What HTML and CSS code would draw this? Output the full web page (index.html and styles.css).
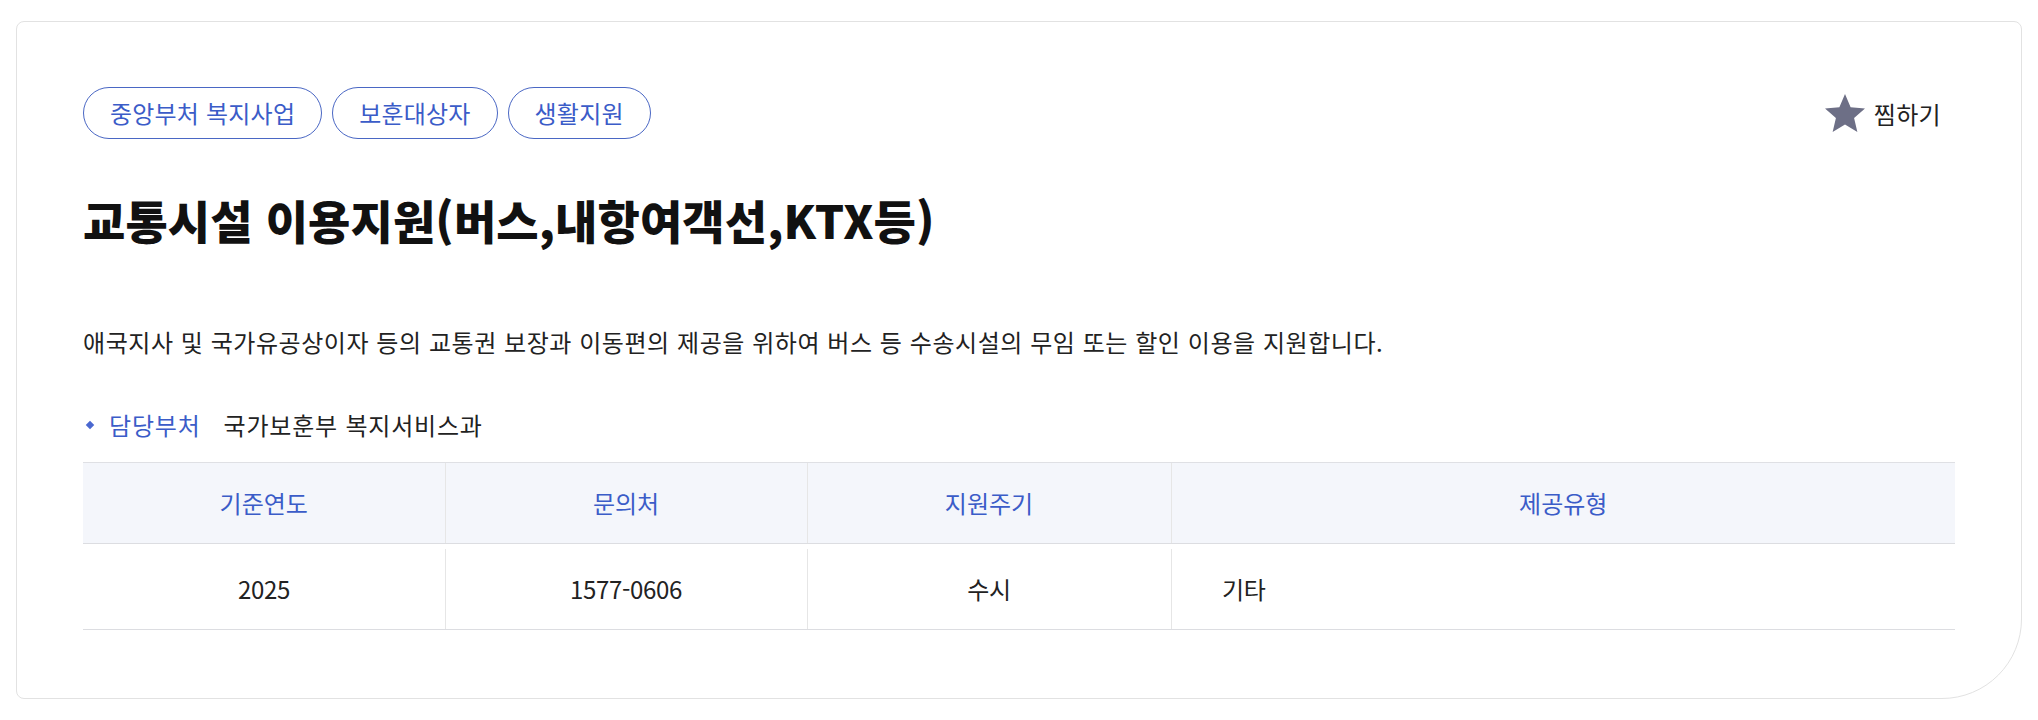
FILE: index.html
```html
<!DOCTYPE html>
<html lang="ko">
<head>
    <meta charset="UTF-8">
    <meta name="viewport" content="width=device-width, initial-scale=1.0">
    <title>교통시설 이용지원</title>
    <link rel="stylesheet" href="styles.css">
</head>
<body>
    <!-- 서비스 상세 카드 -->
    <div class="card">
        <div class="card-top">
            <ul class="tags">
                <li class="tag">중앙부처 복지사업</li>
                <li class="tag">보훈대상자</li>
                <li class="tag">생활지원</li>
            </ul>
            <button class="like-btn" type="button">
                <svg class="star" viewBox="2 1.5 20 20" width="40" height="40">
                    <path d="M12 17.27L18.18 21l-1.64-7.03L22 9.24l-7.19-.61L12 2 9.19 8.63 2 9.24l5.46 4.73L5.82 21z"/>
                </svg>
                <span>찜하기</span>
            </button>
        </div>

        <h1 class="title">교통시설 이용지원(버스,내항여객선,KTX등)</h1>

        <p class="desc">애국지사 및 국가유공상이자 등의 교통권 보장과 이동편의 제공을 위하여 버스 등 수송시설의 무임 또는 할인 이용을 지원합니다.</p>

        <div class="dept">
            <span class="dept-label">담당부처</span>
            <span class="dept-value">국가보훈부 복지서비스과</span>
        </div>

        <!-- 요약 정보 -->
        <table class="info-table">
            <colgroup>
                <col class="col-year">
                <col class="col-tel">
                <col class="col-cycle">
                <col>
            </colgroup>
            <thead>
                <tr>
                    <th>기준연도</th>
                    <th>문의처</th>
                    <th>지원주기</th>
                    <th>제공유형</th>
                </tr>
            </thead>
            <tbody>
                <tr>
                    <td>2025</td>
                    <td>1577-0606</td>
                    <td>수시</td>
                    <td class="left">기타</td>
                </tr>
            </tbody>
        </table>
    </div>
</body>
</html>
```

FILE: styles.css
```css
body {
    margin: 0;
    background-color: #fff;
    font-family: "Noto Sans CJK KR", "Noto Sans", sans-serif;
    color: #222;
}
.card {
    margin: 21px 16px 21px 16px;
    padding: 65px 66px 68px 66px;
    border: 1px solid #e2e2e2;
    border-radius: 8px 8px 80px 8px;
    background-color: #fff;
}
.card-top {
    display: flex;
    justify-content: space-between;
    align-items: center;
}
.tags {
    display: flex;
    gap: 10px;
    list-style: none;
    margin: 0;
    padding: 0;
}
.tag {
    height: 50px;
    line-height: 50px;
    padding: 0 26px;
    border: 1px solid #4a67c4;
    border-radius: 26px;
    color: #3b5cc8;
    font-size: 24px;
    letter-spacing: 0.2px;
}
.like-btn {
    display: flex;
    align-items: center;
    gap: 9px;
    margin-right: 14px;
    padding: 0;
    border: none;
    background: none;
    font-family: inherit;
    font-size: 24px;
    letter-spacing: 0.3px;
    color: #222;
    cursor: pointer;
}
.star {
    fill: #6d6f86;
}
.title {
    margin: 52px 0 0 0;
    font-size: 46px;
    line-height: 57px;
    font-weight: 900;
    letter-spacing: 0.1px;
    color: #111;
}
.desc {
    margin: 77px 0 0 0;
    font-size: 24px;
    line-height: 34px;
    letter-spacing: 0.55px;
}
.dept {
    display: flex;
    align-items: center;
    margin-top: 49px;
    font-size: 24px;
    line-height: 34px;
    letter-spacing: 0.8px;
}
.dept-label {
    display: flex;
    align-items: center;
    color: #3b5cc8;
}
.dept-label::before {
    content: "";
    width: 6px;
    height: 6px;
    margin: 0 16px 0 4px;
    background-color: #4a68d0;
    transform: rotate(45deg);
}
.dept-value {
    margin-left: 23px;
}
.info-table {
    width: 100%;
    margin-top: 20px;
    border-collapse: collapse;
    table-layout: fixed;
}
.col-year, .col-tel {
    width: 362px;
}
.col-cycle {
    width: 364px;
}
.info-table th {
    padding: 0;
    line-height: 80px;
    background-color: #f4f6fb;
    border-top: 1px solid #dfe0e4;
    border-bottom: 1px solid #dcdde1;
    border-left: 1px solid #e6e6e6;
    color: #3b5cc8;
    font-size: 24px;
    font-weight: 400;
}
.info-table th:first-child {
    border-left: none;
}
.info-table td {
    padding: 4px 0 0 0;
    line-height: 81px;
    border-bottom: 1px solid #dcdde1;
    text-align: center;
    font-size: 24px;
    letter-spacing: -0.3px;
}
.info-table td + td {
    background: linear-gradient(#e6e6e6, #e6e6e6) left 5px / 1px calc(100% - 5px) no-repeat;
}
.info-table td.left {
    text-align: left;
    padding-left: 51px;
}
```
